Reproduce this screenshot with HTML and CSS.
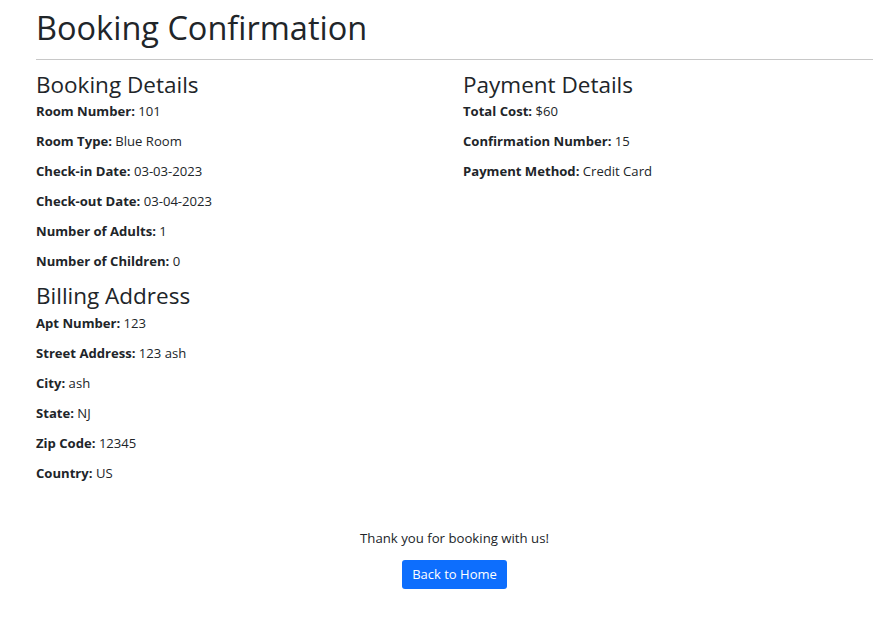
FILE: index.html
```html
<!DOCTYPE html>
<html lang="en">
<head>
<meta charset="utf-8">
<title>Booking Confirmation</title>
<link rel="stylesheet" href="styles.css">
</head>
<body>
<div class="page">
  <h1 class="title">Booking Confirmation</h1>
  <hr class="rule">
  <div class="columns">
    <div class="col">
      <h2 class="section">Booking Details</h2>
      <p class="item"><b>Room Number:</b> 101</p>
      <p class="item"><b>Room Type:</b> Blue Room</p>
      <p class="item"><b>Check-in Date:</b> 03-03-2023</p>
      <p class="item"><b>Check-out Date:</b> 03-04-2023</p>
      <p class="item"><b>Number of Adults:</b> 1</p>
      <p class="item"><b>Number of Children:</b> 0</p>
      <h2 class="section section-sub">Billing Address</h2>
      <p class="item"><b>Apt Number:</b> 123</p>
      <p class="item"><b>Street Address:</b> 123 ash</p>
      <p class="item"><b>City:</b> ash</p>
      <p class="item"><b>State:</b> NJ</p>
      <p class="item"><b>Zip Code:</b> 12345</p>
      <p class="item"><b>Country:</b> US</p>
    </div>
    <div class="col">
      <h2 class="section">Payment Details</h2>
      <p class="item"><b>Total Cost:</b> $60</p>
      <p class="item"><b>Confirmation Number:</b> 15</p>
      <p class="item"><b>Payment Method:</b> Credit Card</p>
    </div>
  </div>
  <div class="footer">
    <p class="thanks">Thank you for booking with us!</p>
    <a class="btn" href="#">Back to Home</a>
  </div>
</div>
</body>
</html>
```

FILE: styles.css
```css
* { box-sizing: border-box; }
body {
  margin: 0;
  font-family: "Open Sans", "Noto Sans", sans-serif;
  color: #212529;
  background: #fff;
}
.page {
  padding: 8px 18px 0 36px;
}
.title {
  margin: 0;
  font-size: 32.5px;
  font-weight: 400;
  line-height: 40px;
}
.rule {
  margin: 11px 0 0;
  border: 0;
  border-top: 1px solid #c8c8c8;
}
.columns {
  display: grid;
  grid-template-columns: 427px 1fr;
  margin-top: 11px;
}
.section {
  margin: 0 0 2px;
  font-size: 22.5px;
  font-weight: 400;
  line-height: 28px;
}
.section-sub {
  margin-top: 11px;
  margin-bottom: 3px;
}
.item {
  margin: 0 0 10px;
  font-size: 13.1px;
  line-height: 20px;
}
.item b { font-weight: 700; }
.footer {
  margin-top: 35px;
  text-align: center;
}
.thanks {
  margin: 0 0 12px;
  font-size: 13.2px;
  line-height: 20px;
}
.btn {
  display: inline-block;
  background: #0d6efd;
  color: #fff;
  text-decoration: none;
  font-size: 13px;
  line-height: 29px;
  height: 29px;
  padding: 0 10px;
  border-radius: 3px;
}
```
